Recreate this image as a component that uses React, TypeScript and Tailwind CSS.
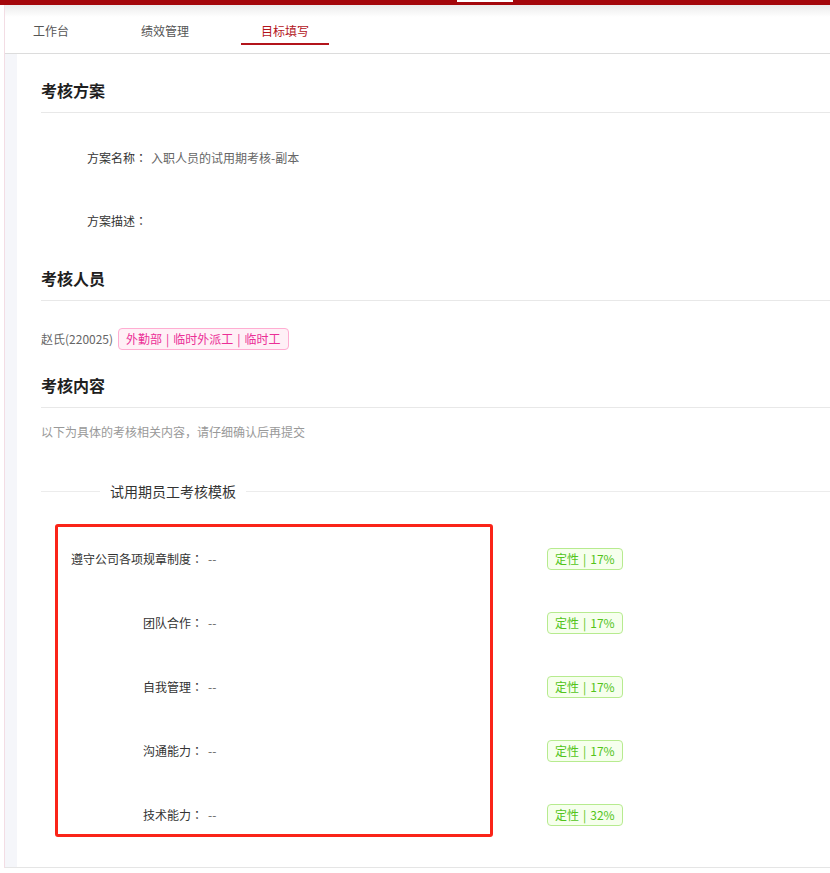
import React from "react";

const font = { fontFamily: '"Noto Sans CJK SC", "Noto Sans", sans-serif' };
const jp = { fontFamily: '"Noto Sans CJK JP", "Noto Sans CJK SC", sans-serif' };

const rows = [
  { label: "遵守公司各项规章制度", pct: "17%" },
  { label: "团队合作", pct: "17%" },
  { label: "自我管理", pct: "17%" },
  { label: "沟通能力", pct: "17%" },
  { label: "技术能力", pct: "32%" },
];

function Colon() {
  return <span style={jp}>：</span>;
}

function Pipe() {
  return <span className="px-[4px]">|</span>;
}

function Heading({ children }: { children: React.ReactNode }) {
  return (
    <div className="border-b border-[#e8e8e8] pb-[10px]">
      <div className="h-[24px] text-[16px] leading-[24px] font-bold text-[#1f1f1f]">{children}</div>
    </div>
  );
}

export default function App() {
  return (
    <div className="relative w-[830px] h-[873px] overflow-hidden bg-white text-[12px]" style={font}>
      {/* top red bar */}
      <div className="relative h-[5px] bg-[#a4070b]">
        <div className="absolute left-[457px] top-0 w-[56px] h-[2px] bg-white" />
      </div>
      <div className="flex">
        <div className="w-[4px] shrink-0" />
        <div className="w-px shrink-0 bg-[#f3dde4]" />
        <div className="flex-1 flex flex-col">
          {/* tabs */}
          <div className="h-[49px] border-b border-[#dcdcdc] bg-[linear-gradient(to_bottom,#ebebeb,#ffffff_12px)] flex pl-[8px] gap-[32px]">
            <div className="px-[20px] h-full flex items-center pt-[3px] text-[#555]">工作台</div>
            <div className="px-[20px] h-full flex items-center pt-[3px] text-[#555]">绩效管理</div>
            <div className="relative px-[20px] h-full flex items-center pt-[3px] text-[#b3141b]">
              目标填写
              <div className="absolute left-0 right-0 bottom-[8px] h-[2px] bg-[#b3141b]" />
            </div>
          </div>
          <div className="flex h-[813px]">
            <div className="w-[12px] bg-[#f5f6fa] shrink-0" />
            <div className="flex-1 pl-[24px] pt-[24px] flex flex-col">
              <Heading>考核方案</Heading>
              <div className="flex flex-col pt-[29px] gap-[31px] pl-[46px]">
                <div className="h-[32px] flex items-center">
                  <span className="text-[#333]">方案名称<Colon /></span>
                  <span className="ml-[4px] text-[#666]">入职人员的试用期考核-副本</span>
                </div>
                <div className="h-[32px] flex items-center">
                  <span className="text-[#333]">方案描述<Colon /></span>
                </div>
              </div>
              <div className="mt-[29px]">
                <Heading>考核人员</Heading>
              </div>
              <div className="mt-[27px] h-[22px] flex items-center">
                <span className="text-[#666]">赵氏(220025)</span>
                <span className="ml-[5px] h-[22px] flex items-center px-[7px] border border-[#ffadd2] bg-[#fff0f6] text-[#eb2f96] rounded-[4px]">
                  外勤部<Pipe />临时外派工<Pipe />临时工
                </span>
              </div>
              <div className="mt-[23px]">
                <Heading>考核内容</Heading>
              </div>
              <div className="mt-[14px] h-[20px] leading-[20px] text-[#999]">以下为具体的考核相关内容，请仔细确认后再提交</div>
              <div className="mt-[38px] h-[22px] flex items-center">
                <div className="w-[59px] h-px bg-[#ececec]" />
                <div className="px-[10px] text-[14px] leading-[22px] text-[#333]">试用期员工考核模板</div>
                <div className="flex-1 h-px bg-[#ececec]" />
              </div>
              <div className="mt-[41px] flex flex-col gap-[32px]">
                {rows.map((r) => (
                  <div key={r.label} className="h-[32px] flex items-center">
                    <div className="w-[162px] text-right text-[#333]">{r.label}<Colon /></div>
                    <div className="w-[344px] pl-[5px] text-[#666]">--</div>
                    <div className="h-[22px] flex items-center px-[7px] border border-[#b7eb8f] bg-[#f6ffed] text-[#52c41a] rounded-[4px]">
                      定性<span className="px-[4px]">|</span>{r.pct}
                    </div>
                  </div>
                ))}
              </div>
            </div>
          </div>
          <div className="border-t border-[#e5e5e5] flex-1" />
        </div>
      </div>
      {/* annotation box */}
      <div className="absolute left-[55px] top-[524px] w-[438px] h-[313px] border-[3px] border-[#fa2418] rounded-[3px] pointer-events-none" />
    </div>
  );
}
